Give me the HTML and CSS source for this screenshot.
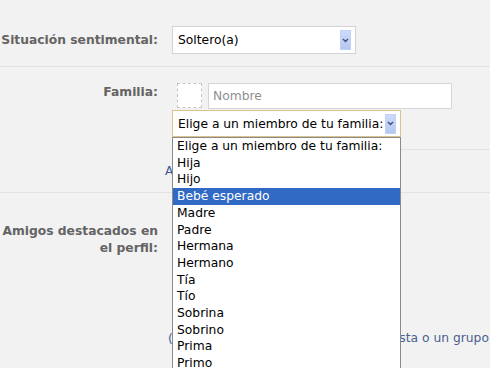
FILE: index.html
```html
<!DOCTYPE html>
<html>
	<head>
		<title>Editar perfil</title>
		<link rel="stylesheet" href="styles.css">
	</head>
	<body>
	<div class="form">
		<div class="row status">
			<div class="label">Situación sentimental:</div>
			<div class="field">
				<div class="select status-select">
					<span class="value">Soltero(a)</span>
					<span class="arrow"><svg width="7" height="5" viewBox="0 0 7 5"><path d="M1 1 L3.5 3.5 L6 1" fill="none" stroke="#3c4f78" stroke-width="1.4"/></svg></span>
				</div>
			</div>
		</div>

		<div class="row family">
			<div class="label">Familia:</div>
			<div class="field">
				<div class="member">
					<div class="member-top">
						<div class="photo"></div>
						<div class="input placeholder">Nombre</div>
					</div>
					<div class="relation">
						<div class="select relation-select focused">
							<span class="value">Elige a un miembro de tu familia:</span>
							<span class="arrow"><svg width="7" height="5" viewBox="0 0 7 5"><path d="M1 1 L3.5 3.5 L6 1" fill="none" stroke="#3c4f78" stroke-width="1.4"/></svg></span>
						</div>
						<ul class="dropdown">
							<li>Elige a un miembro de tu familia:</li>
							<li>Hija</li>
							<li>Hijo</li>
							<li class="selected">Bebé esperado</li>
							<li>Madre</li>
							<li>Padre</li>
							<li>Hermana</li>
							<li>Hermano</li>
							<li>Tía</li>
							<li>Tío</li>
							<li>Sobrina</li>
							<li>Sobrino</li>
							<li>Prima</li>
							<li>Primo</li>
							<li>Abuela</li>
							<li>Abuelo</li>
						</ul>
					</div>
				</div>
				<a class="add-link" href="#">Añadir a otro familiar</a>
			</div>
		</div>

		<div class="row friends">
			<div class="label">Amigos destacados en<br>el perfil:</div>
			<div class="field">
				<a class="hint" href="#">(Selecciona amigos destacados una lista o un grupo)</a>
			</div>
		</div>
	</div>
	</body>
</html>
```

FILE: styles.css
```css
html,body{margin:0;padding:0;}

body{background-color:#f2f2f2;font-family:"DejaVu Sans",Verdana,sans-serif;font-size:12.3px;color:#000;overflow:hidden;width:490px;height:368px;}

.form{width:490px;}

.row{display:grid;grid-template-columns:158px 1fr;column-gap:14px;border-bottom:1px solid #e2e2e2;}

.label{text-align:right;font-weight:bold;color:#646464;font-size:12.3px;white-space:nowrap;}

.field{min-width:0;}

/* situacion */
.status{padding:26px 0 12px;}
.status .label{line-height:28px;}

/* selects drawn by hand */
.select{position:relative;box-sizing:border-box;background-color:#fff;border:1px solid #d3d3d3;display:flex;align-items:center;padding:0 4px 0 5px;}
.select .value{flex:1;white-space:nowrap;overflow:hidden;}
.select .arrow{width:11px;height:20px;box-sizing:border-box;background:linear-gradient(#cddbfa,#b4c7f2);border:1px solid #c3d2f4;display:flex;align-items:center;justify-content:center;}
.select.focused{border-color:#d9c48f;}

.status-select{width:184px;height:28px;}

/* familia */
.family{padding-top:16px;padding-bottom:12px;}
.family .label{line-height:18px;}

.member{border-bottom:1px solid #e2e2e2;padding-bottom:12px;}
.member-top{display:flex;gap:6px;padding-left:5px;margin-bottom:1px;}
.photo{width:25px;height:25px;box-sizing:border-box;background-color:#fff;border:1px dashed #c6c6c6;}
.input{width:244px;height:26px;box-sizing:border-box;background-color:#fff;border:1px solid #d6d6d6;padding-left:4px;line-height:24px;}
.placeholder{color:#8f8f8f;}

.relation{position:relative;width:229px;}
.relation-select{width:229px;height:27px;padding-left:5px;}

.dropdown{position:absolute;z-index:5;top:100%;left:0;width:229px;box-sizing:border-box;margin:0;padding:0;list-style:none;background-color:#fff;border:1px solid #8a8a8a;border-bottom:none;}
.dropdown li{line-height:16.7px;padding-left:4px;white-space:nowrap;}
.dropdown li.selected{background-color:#316ac5;color:#fff;}

a{color:#3b5998;text-decoration:none;}

.add-link{display:block;margin:13px 0 0 -7px;line-height:17px;white-space:nowrap;}

/* amigos */
.friends{padding-top:30px;height:175px;border-bottom:none;}
.friends .label{line-height:17px;}
.friends .field{padding-top:107px;}
.hint{display:block;margin-left:-4px;white-space:nowrap;line-height:17px;color:#4a5f8f;}
```
